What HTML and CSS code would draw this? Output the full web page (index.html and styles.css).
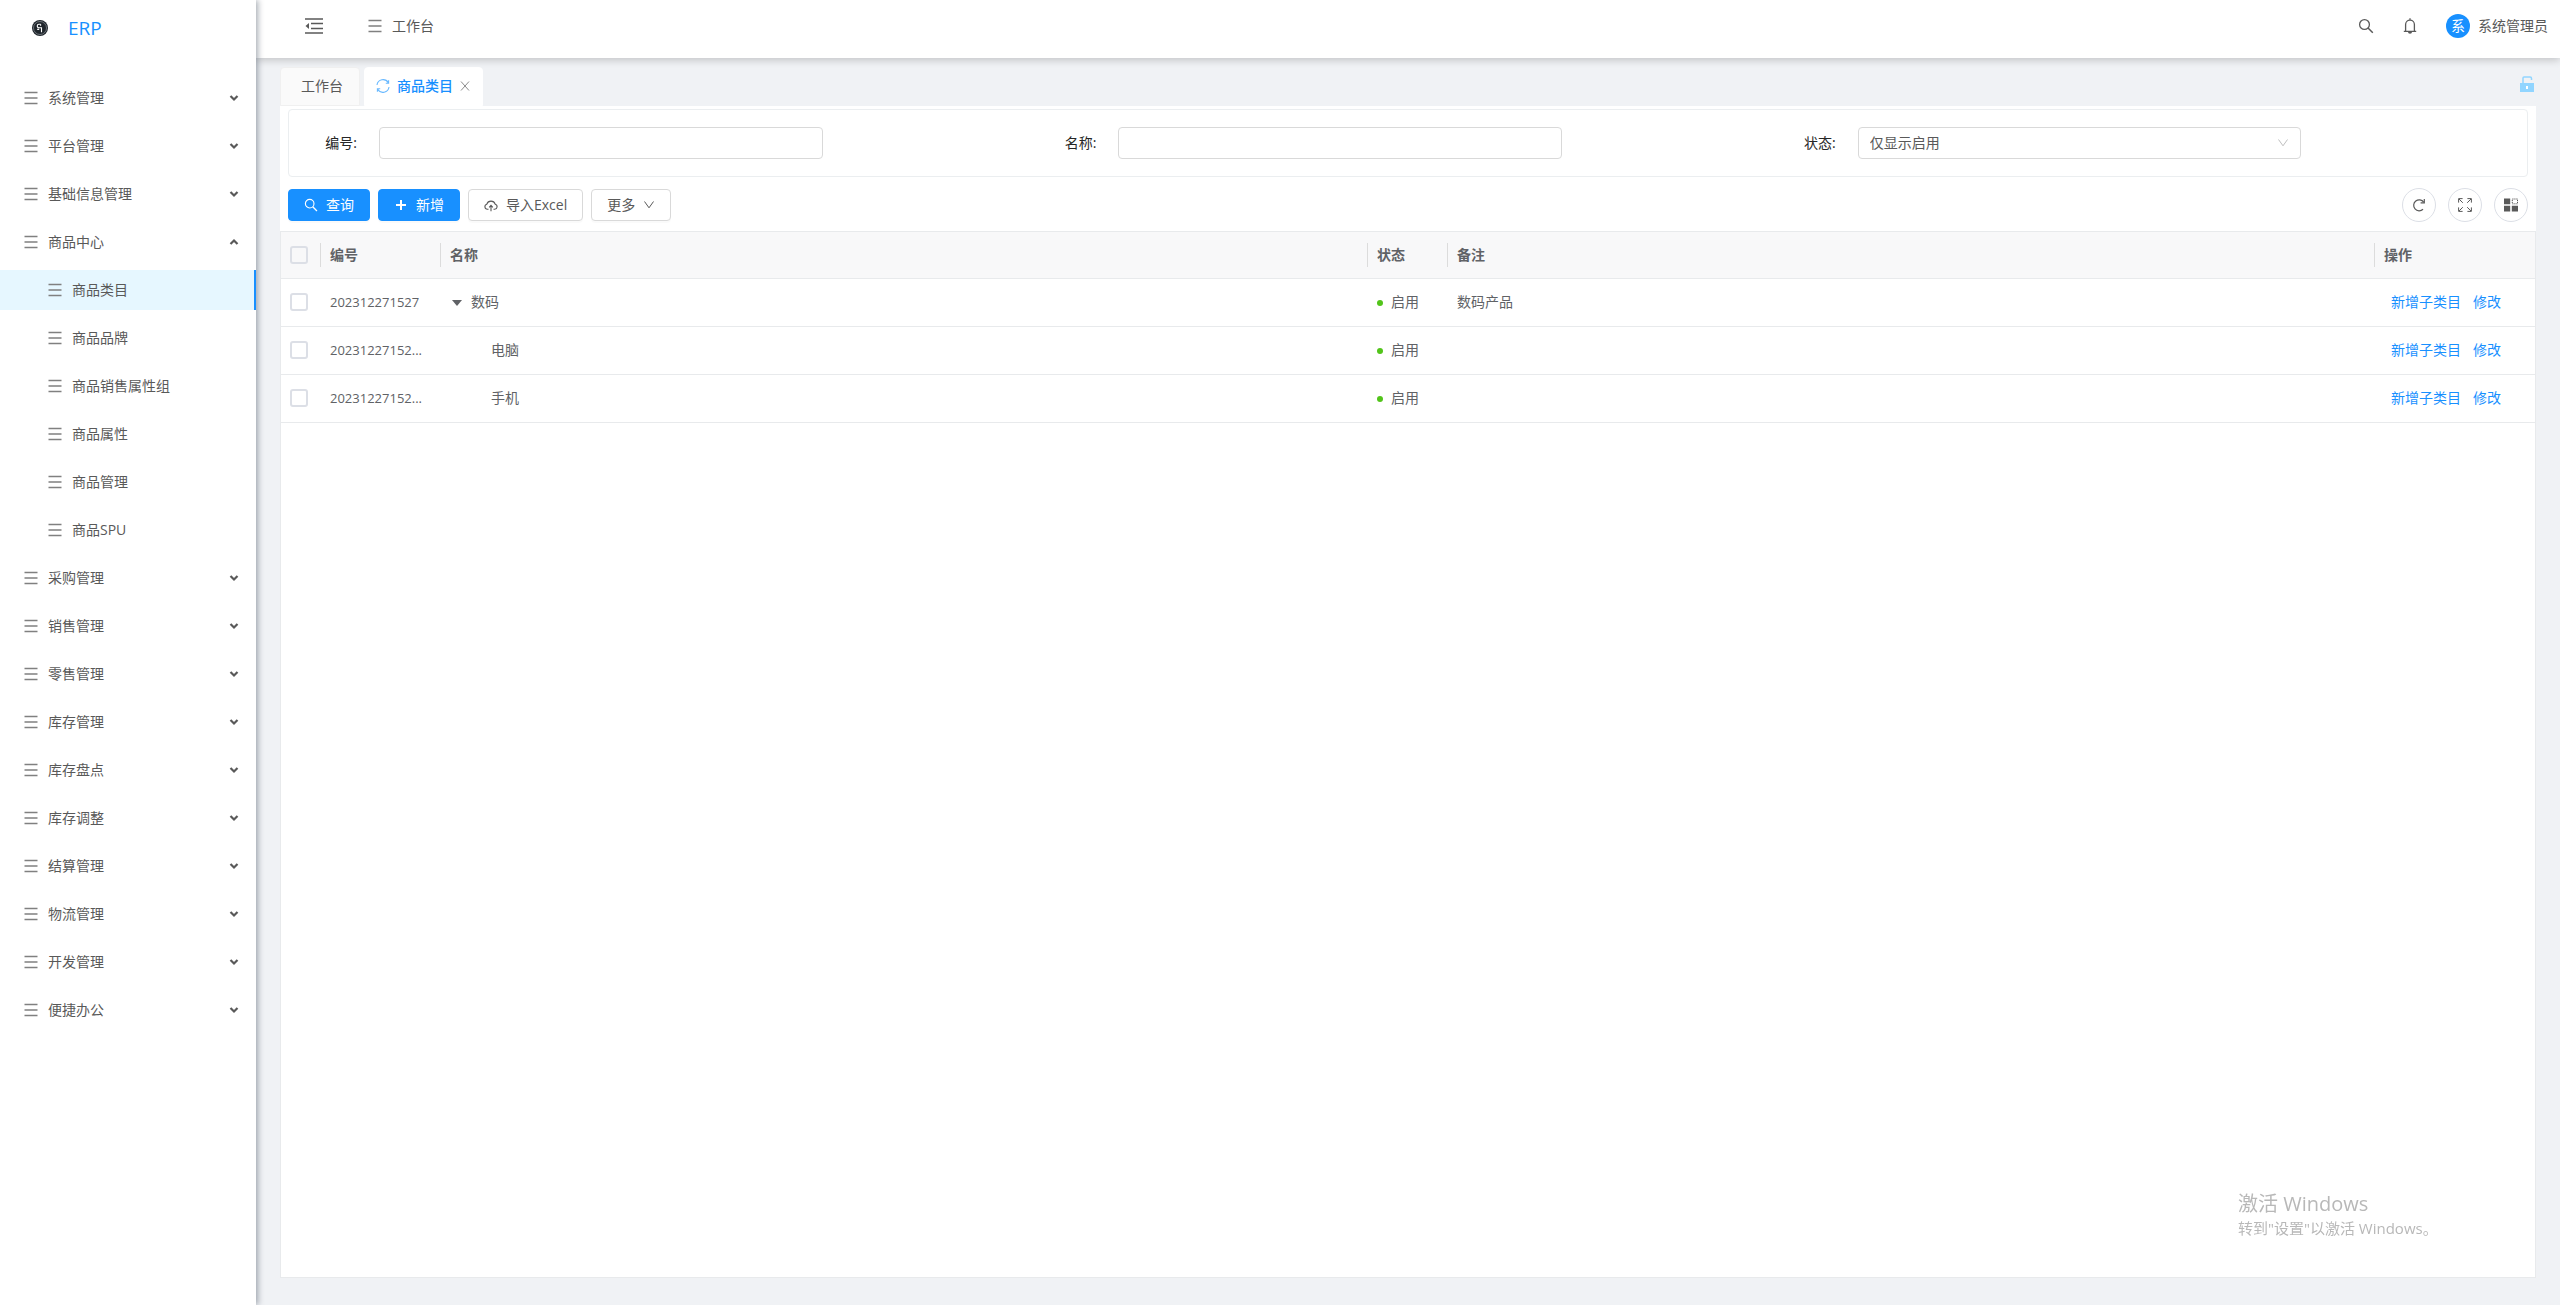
FILE: index.html
```html
<!DOCTYPE html>
<html lang="zh-CN">
<head>
<meta charset="utf-8">
<title>ERP - 商品类目</title>
<link rel="stylesheet" href="styles.css">
</head>
<body>
<svg class="sprite" aria-hidden="true">
  <symbol id="i-menu" viewBox="0 0 14 14"><path d="M.500 1.500h13M.500 7h13M.500 12.500h13" fill="none" stroke="currentColor" stroke-width="1.300"/></symbol>
  <symbol id="i-arrow" viewBox="0 0 10 10"><path d="M1.500 3 5 6.500l3.500-3.500" fill="none" stroke="currentColor" stroke-width="2.200"/></symbol>
  <symbol id="i-down" viewBox="0 0 12 12"><path d="M1.500 2.500 6 8.800l4.500-6.300" fill="none" stroke="currentColor"/></symbol>
  <symbol id="i-search" viewBox="0 0 16 16"><circle cx="6.500" cy="6.500" r="4.900" fill="none" stroke="currentColor" stroke-width="1.300"/><path d="M10 10l4.800 4.800" stroke="currentColor" stroke-width="1.500"/></symbol>
</svg>
<div class="app">
  <aside class="sidebar">
    <div class="brand">
      <svg class="logo" viewBox="0 0 16 16"><circle cx="8" cy="8" r="8" fill="#1f252b"/><circle cx="8" cy="8" r="6.500" fill="none" stroke="#8c9298" stroke-width=".7"/><path d="M8.600 4.300H6.800a1.500 1.500 0 0 0-1.500 1.500v.4a1.500 1.500 0 0 0 1.500 1.500h2.700v4.600M8.600 4.300v1.400M5.200 9.400h2" fill="none" stroke="#fff" stroke-width="1.100"/></svg>
      <span class="brand-name">ERP</span>
    </div>
    <nav class="menu">
      <a class="item" href="#"><svg class="ic"><use href="#i-menu"/></svg><span>系统管理</span><svg class="arrow"><use href="#i-arrow"/></svg></a>
      <a class="item" href="#"><svg class="ic"><use href="#i-menu"/></svg><span>平台管理</span><svg class="arrow"><use href="#i-arrow"/></svg></a>
      <a class="item" href="#"><svg class="ic"><use href="#i-menu"/></svg><span>基础信息管理</span><svg class="arrow"><use href="#i-arrow"/></svg></a>
      <a class="item open" href="#"><svg class="ic"><use href="#i-menu"/></svg><span>商品中心</span><svg class="arrow"><use href="#i-arrow"/></svg></a>
      <a class="item sub active" href="#"><svg class="ic"><use href="#i-menu"/></svg><span>商品类目</span></a>
      <a class="item sub" href="#"><svg class="ic"><use href="#i-menu"/></svg><span>商品品牌</span></a>
      <a class="item sub" href="#"><svg class="ic"><use href="#i-menu"/></svg><span>商品销售属性组</span></a>
      <a class="item sub" href="#"><svg class="ic"><use href="#i-menu"/></svg><span>商品属性</span></a>
      <a class="item sub" href="#"><svg class="ic"><use href="#i-menu"/></svg><span>商品管理</span></a>
      <a class="item sub" href="#"><svg class="ic"><use href="#i-menu"/></svg><span>商品SPU</span></a>
      <a class="item" href="#"><svg class="ic"><use href="#i-menu"/></svg><span>采购管理</span><svg class="arrow"><use href="#i-arrow"/></svg></a>
      <a class="item" href="#"><svg class="ic"><use href="#i-menu"/></svg><span>销售管理</span><svg class="arrow"><use href="#i-arrow"/></svg></a>
      <a class="item" href="#"><svg class="ic"><use href="#i-menu"/></svg><span>零售管理</span><svg class="arrow"><use href="#i-arrow"/></svg></a>
      <a class="item" href="#"><svg class="ic"><use href="#i-menu"/></svg><span>库存管理</span><svg class="arrow"><use href="#i-arrow"/></svg></a>
      <a class="item" href="#"><svg class="ic"><use href="#i-menu"/></svg><span>库存盘点</span><svg class="arrow"><use href="#i-arrow"/></svg></a>
      <a class="item" href="#"><svg class="ic"><use href="#i-menu"/></svg><span>库存调整</span><svg class="arrow"><use href="#i-arrow"/></svg></a>
      <a class="item" href="#"><svg class="ic"><use href="#i-menu"/></svg><span>结算管理</span><svg class="arrow"><use href="#i-arrow"/></svg></a>
      <a class="item" href="#"><svg class="ic"><use href="#i-menu"/></svg><span>物流管理</span><svg class="arrow"><use href="#i-arrow"/></svg></a>
      <a class="item" href="#"><svg class="ic"><use href="#i-menu"/></svg><span>开发管理</span><svg class="arrow"><use href="#i-arrow"/></svg></a>
      <a class="item" href="#"><svg class="ic"><use href="#i-menu"/></svg><span>便捷办公</span><svg class="arrow"><use href="#i-arrow"/></svg></a>
    </nav>
  </aside>

  <div class="page">
    <header class="topbar">
      <button class="plain fold" type="button" aria-label="收起菜单"><svg viewBox="0 0 18 16"><path d="M0 1h18M6 5.500h12M6 10.500h12M0 15h18" fill="none" stroke="currentColor" stroke-width="1.500"/><path d="M4 5v6L.5 8z" fill="currentColor"/></svg></button>
      <a class="crumb" href="#"><svg class="ic"><use href="#i-menu"/></svg><span>工作台</span></a>
      <div class="tools">
        <button class="plain" type="button" aria-label="搜索"><svg class="tool-ic"><use href="#i-search"/></svg></button>
        <button class="plain" type="button" aria-label="通知"><svg class="tool-ic" viewBox="0 0 16 16"><path d="M1.800 13.300h12.400M3.600 13V6.500a4.400 4.400 0 0 1 8.800 0V13M8 .2v2" fill="none" stroke="currentColor" stroke-width="1.300"/><path d="M6 14h4a2 1.800 0 0 1-4 0z" fill="currentColor"/></svg></button>
        <a class="user" href="#"><span class="avatar">系</span><span>系统管理员</span></a>
      </div>
    </header>

    <main class="content">
      <div class="tabs">
        <a class="tab" href="#">工作台</a>
        <div class="tab current">
          <svg class="ic" viewBox="0 0 14 14"><path d="M1 6a6.100 6.100 0 0 1 11.300-2.300M13 8A6.100 6.100 0 0 1 1.700 10.300M12.600 1.300v2.900H9.800M1.400 12.700V9.800h2.800" fill="none" stroke="#69b9ff" stroke-width="1.100"/></svg>
          <a href="#">商品类目</a>
          <button class="plain close" type="button" aria-label="关闭"><svg viewBox="0 0 10 10"><path d="M1 .5l8 9M9 .5l-8 9" stroke="currentColor" fill="none"/></svg></button>
        </div>
        <button class="plain lock" type="button" aria-label="锁定页签"><svg viewBox="0 0 14 16"><path d="M3 7.500V1.900a1 1 0 0 1 1-1h6a1.500 1.500 0 0 1 1.500 1.500V4" fill="none" stroke="#91d5ff" stroke-width="1.500"/><path d="M0 7h14v9H0z" fill="#91d5ff"/><path d="M6 10h2v3H6z" fill="#fff"/></svg></button>
      </div>

      <section class="panel">
        <form class="filters" id="filters">
          <div class="field"><label for="code">编号:</label><input id="code" type="text"></div>
          <div class="field"><label for="name">名称:</label><input id="name" type="text"></div>
          <div class="field"><label for="state">状态:</label>
            <div class="select"><select id="state"><option>仅显示启用</option></select><svg><use href="#i-down"/></svg></div>
          </div>
        </form>

        <div class="toolbar">
          <button class="btn primary" type="submit" form="filters"><svg><use href="#i-search"/></svg>查询</button>
          <button class="btn primary" type="button"><svg viewBox="0 0 14 14"><path d="M7 2v10M2 7h10" stroke="currentColor" stroke-width="2"/></svg>新增</button>
          <button class="btn" type="button"><svg viewBox="0 0 14 14"><path d="M4.500 11.300H3.400A2.600 2.600 0 0 1 2.800 6.200a4.400 4.400 0 0 1 8.400 0 2.600 2.600 0 0 1-.6 5.100H9.500M7 13.200V7.500M5.200 9.300 7 7.300l1.800 2" fill="none" stroke="currentColor" stroke-width="1.100"/></svg>导入Excel</button>
          <button class="btn" type="button">更多<svg class="caret"><use href="#i-down"/></svg></button>
          <div class="round-group">
            <button class="round" type="button" aria-label="刷新"><svg viewBox="0 0 14 14"><path d="M11.700 4.200A5.500 5.500 0 1 0 11 11.300" fill="none" stroke="currentColor" stroke-width="1.200"/><path d="M12.300 1v3.800H8.600" fill="none" stroke="currentColor" stroke-width="1.200"/></svg></button>
            <button class="round" type="button" aria-label="全屏"><svg viewBox="0 0 14 14"><path d="M.6 4.600V.6h4M9.400.6h4v4M13.400 9.400v4h-4M4.600 13.400h-4v-4M1 1l3.800 3.800M13 1 9.200 4.800M1 13l3.800-3.800M13 13 9.200 9.200" fill="none" stroke="currentColor"/></svg></button>
            <button class="round" type="button" aria-label="列设置"><svg viewBox="0 0 14 14"><path d="M0 .5h6.200v5.800H0zM0 7.700h6.200v5.800H0zM7.800 7.700H14v5.800H7.800z" fill="currentColor"/><path d="M8.300 1h5.200v4.800H8.300z" fill="none" stroke="currentColor" stroke-dasharray="1.200 .8"/></svg></button>
          </div>
        </div>

        <div class="grid">
          <table>
            <colgroup><col class="c-check"><col class="c-code"><col><col class="c-state"><col><col class="c-ops"></colgroup>
            <thead>
              <tr><th class="check"><input type="checkbox" aria-label="全选"></th><th>编号</th><th>名称</th><th>状态</th><th>备注</th><th>操作</th></tr>
            </thead>
            <tbody>
              <tr>
                <td class="check"><input type="checkbox" aria-label="选择数码"></td><td class="code">202312271527</td>
                <td><button class="plain toggle" type="button" aria-label="收起"><svg viewBox="0 0 10 6"><path d="M0 0h10L5 6z" fill="currentColor"/></svg></button>数码</td>
                <td><span class="dot"></span>启用</td><td>数码产品</td>
                <td class="ops"><a href="#">新增子类目</a><a href="#">修改</a></td>
              </tr>
              <tr>
                <td class="check"><input type="checkbox" aria-label="选择电脑"></td><td class="code">20231227152...</td>
                <td class="child">电脑</td><td><span class="dot"></span>启用</td><td></td>
                <td class="ops"><a href="#">新增子类目</a><a href="#">修改</a></td>
              </tr>
              <tr>
                <td class="check"><input type="checkbox" aria-label="选择手机"></td><td class="code">20231227152...</td>
                <td class="child">手机</td><td><span class="dot"></span>启用</td><td></td>
                <td class="ops"><a href="#">新增子类目</a><a href="#">修改</a></td>
              </tr>
            </tbody>
          </table>
        </div>
      </section>
    </main>
  </div>
</div>
<div class="watermark"><div class="wm-title">激活 Windows</div><div class="wm-text">转到"设置"以激活 Windows。</div></div>
</body>
</html>
```

FILE: styles.css
```css
* { box-sizing: border-box; }

body {
  margin: 0;
  background: #f0f2f5;
  color: #595959;
  font-family: "Open Sans", "Noto Sans CJK SC", sans-serif;
  font-size: 14px;
  line-height: 20px;
}

a { color: inherit; text-decoration: none; }
button, input, select { font: inherit; color: inherit; }
svg { display: block; flex: none; }
.sprite { display: none; }
.ic { width: 14px; height: 14px; }
.plain { border: 0; padding: 0; background: none; display: block; }

.app { display: flex; min-height: 100vh; }

/* sidebar */
.sidebar {
  flex: none;
  width: 256px;
  background: #fff;
  box-shadow: 2px 0 6px rgba(0, 21, 41, .35);
  z-index: 2;
}
.brand { display: flex; align-items: center; gap: 20px; height: 58px; padding: 0 32px 2px; }
.logo { width: 16px; height: 16px; }
.brand-name { color: #1890ff; font-size: 19px; font-weight: 500; }
.menu { display: grid; gap: 8px; padding-top: 20px; }
.item { display: flex; align-items: center; gap: 10px; height: 40px; padding: 0 17px 1px 24px; }
.item .ic, .crumb .ic { color: #808080; }
.arrow { width: 10px; height: 10px; margin-left: auto; }
.open .arrow { transform: rotate(180deg); }
.sub { padding-left: 48px; }
.active { background: #e6f7ff; border-right: 2px solid #1890ff; }

/* top bar */
.page { flex: 1; min-width: 0; display: flex; flex-direction: column; }
.topbar {
  display: flex;
  align-items: center;
  height: 58px;
  padding: 0 12px 7px 49px;
  background: #fff;
  box-shadow: 0 2px 8px rgba(0, 0, 0, .2);
  z-index: 1;
}
.fold svg { width: 18px; height: 16px; }
.crumb { display: flex; align-items: center; gap: 10px; margin-left: 45px; }
.tools { display: flex; align-items: center; gap: 28px; margin-left: auto; }
.tool-ic { width: 16px; height: 16px; }
.user { display: flex; align-items: center; gap: 8px; }
.avatar {
  width: 24px;
  height: 24px;
  border-radius: 50%;
  background: #1890ff;
  color: #fff;
  line-height: 24px;
  text-align: center;
}

/* tabs */
.content { flex: 1; display: flex; flex-direction: column; padding: 9px 24px 27px; }
.tabs { display: flex; gap: 4px; }
.tab {
  display: flex;
  align-items: center;
  height: 39px;
  padding: 0 16px 2px 20px;
  border: 1px solid #f0f0f0;
  border-radius: 4px 4px 0 0;
  background: #fafafa;
}
.current { padding: 0 12px 2px 11px; gap: 7px; background: #fff; border-color: #fff; color: #1890ff; font-weight: 500; }
.close { color: #8c8c8c; }
.close svg { width: 10px; height: 10px; }
.lock { align-self: flex-start; margin-left: auto; padding: 9px 2px 0 0; }
.lock svg { width: 14px; height: 16px; }

/* panel */
.panel { flex: 1; display: flex; flex-direction: column; padding-top: 3px; background: #fff; }
.filters {
  display: grid;
  grid-template-columns: repeat(3, 1fr);
  margin: 0 8px;
  padding: 17px 10px;
  border: 1px solid #ebeef0;
  border-radius: 4px;
}
.field { display: flex; align-items: center; }
.field label { width: 80px; padding-right: 22px; text-align: right; color: #262626; }
.field input, .select { width: 60%; height: 32px; }
.field input, .select select { border: 1px solid #d9d9d9; border-radius: 4px; background: #fff; padding: 0 11px; }
.select { display: grid; align-items: center; }
.select select { grid-area: 1 / 1; width: 100%; height: 32px; appearance: none; }
.select svg { grid-area: 1 / 1; justify-self: end; width: 12px; height: 12px; margin-right: 12px; color: #bfbfbf; pointer-events: none; }

.toolbar { display: flex; align-items: center; gap: 8px; padding: 11px 8px 9px; }
.btn {
  display: flex;
  align-items: center;
  gap: 8px;
  height: 32px;
  padding: 0 15px;
  border: 1px solid #d9d9d9;
  border-radius: 4px;
  background: #fff;
  box-shadow: 0 2px 0 rgba(0, 0, 0, .02);
}
.btn svg { width: 14px; height: 14px; }
.btn .caret { width: 12px; height: 12px; }
.primary { background: #1890ff; border-color: #1890ff; color: #fff; }
.round-group { display: flex; gap: 12px; margin-left: auto; }
.round {
  display: grid;
  place-items: center;
  width: 34px;
  height: 34px;
  padding: 0;
  border: 1px solid #dcdfe6;
  border-radius: 50%;
  background: #fff;
}
.round svg { width: 14px; height: 14px; }

/* data table */
.grid { flex: 1; border: solid #e8eaec; border-width: 0 1px 1px; color: #606266; }
table { width: 100%; table-layout: fixed; border-collapse: separate; border-spacing: 0; }
.c-check { width: 40px; }
.c-code { width: 120px; }
.c-state { width: 80px; }
.c-ops { width: 160px; }
th, td { height: 48px; padding: 0 9px; border-bottom: 1px solid #e8eaec; text-align: left; white-space: nowrap; }
td { padding-bottom: 1px; }
th {
  border-top: 1px solid #e8eaec;
  background: linear-gradient(#dcdcdc, #dcdcdc) right center / 1px 24px no-repeat #f8f8f9;
  font-weight: 700;
}
th:last-child { background: #f8f8f9; }
.check input {
  display: block;
  appearance: none;
  width: 18px;
  height: 18px;
  margin: 0;
  border: 2px solid #dcdfe6;
  border-radius: 3px;
  background: #fff;
}
th.check input { background: none; }
.code { font-size: 13px; }
.toggle { display: inline-block; margin: 0 9px 0 2px; vertical-align: middle; }
.toggle svg { width: 10px; height: 6px; }
.child { padding-left: 50px; }
.dot { display: inline-block; width: 6px; height: 6px; margin-right: 8px; border-radius: 50%; background: #52c41a; vertical-align: middle; }
.ops { padding: 0 16px 2px; color: #1890ff; }
.ops a + a { margin-left: 12px; }

/* system notice over the page */
.watermark { position: fixed; right: 124px; bottom: 67px; width: 198px; color: #b8b8b8; pointer-events: none; }
.wm-title { font-size: 20px; line-height: 28px; }
.wm-text { font-size: 15px; line-height: 20px; white-space: nowrap; }
```
